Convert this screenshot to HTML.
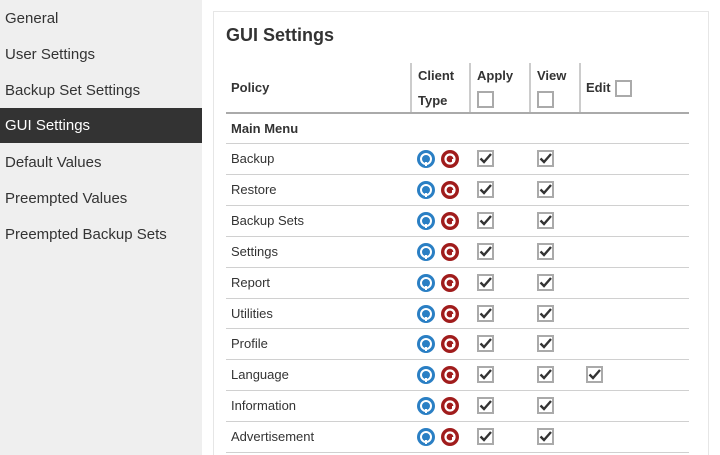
<!DOCTYPE html>
<html><head><style>
*{margin:0;padding:0;box-sizing:border-box}
html,body{width:720px;height:455px;overflow:hidden}
body{background:#fff;font-family:"Liberation Sans",Arial,sans-serif;color:#333;position:relative}
.side{position:absolute;left:0;top:0;width:202px;height:455px;background:#efefef}
.side div{position:absolute;left:5px;font-size:15px;height:36px;line-height:36px;margin-top:1px}
.side .act{left:0;width:202px;padding-left:5px;background:#333;color:#fff;top:108px;height:35px;line-height:35px;margin-top:0}
.panel{position:absolute;left:213px;top:11px;width:496px;height:450px;border:1px solid #e6e6e6}
h1{position:absolute;left:226px;top:25px;font-size:18px;font-weight:bold;color:#333}
.t{position:absolute;font-size:13px}
.b{font-weight:bold}
.vl{position:absolute;top:63px;height:50px;width:2px;background:#ccc}
.hl{position:absolute;left:226px;width:463px;height:1px;background:#d0d0d0}
.cb{position:absolute;width:17px;height:17px;border:2px solid #aaa;background:#fff}
.ck{position:absolute;width:17px;height:17px;border:2px solid #aaa;background:#fff}
.ck svg{position:absolute;left:0;top:0}
.ic{position:absolute;width:18px;height:18px}
</style></head><body>
<div class="side">
<div style="top:0">General</div>
<div style="top:36px">User Settings</div>
<div style="top:72px">Backup Set Settings</div>
<div class="act">GUI Settings</div>
<div style="top:144px">Default Values</div>
<div style="top:180px">Preempted Values</div>
<div style="top:216px">Preempted Backup Sets</div>
</div>
<div class="panel"></div>
<h1>GUI Settings</h1>
<div class="t b" style="left:231px;top:80px">Policy</div>
<div class="t b" style="left:418px;top:68px">Client</div>
<div class="t b" style="left:418px;top:93px">Type</div>
<div class="t b" style="left:477px;top:68px">Apply</div>
<div class="t b" style="left:537px;top:68px">View</div>
<div class="t b" style="left:586px;top:80px">Edit</div>
<div class="cb" style="left:477px;top:91px"></div>
<div class="cb" style="left:537px;top:91px"></div>
<div class="cb" style="left:615px;top:80px"></div>
<div class="vl" style="left:410px"></div>
<div class="vl" style="left:469px"></div>
<div class="vl" style="left:529px"></div>
<div class="vl" style="left:579px"></div>
<div class="hl" style="top:112px;height:2px;background:#aaa"></div>
<div class="t b" style="left:231px;top:121px">Main Menu</div>
<div id="rows"></div>
<script>
var n=["Backup","Restore","Backup Sets","Settings","Report","Utilities","Profile","Language","Information","Advertisement"];
var h="";var chk='<svg width="13" height="13" viewBox="0 0 13 13"><path d="M1.5 6.5 L5 10 L12 2" stroke="#333" stroke-width="2.4" fill="none"/></svg>';
for(var i=0;i<n.length;i++){var ty=143+i*30.9;var cy=ty+16;
h+='<div class="hl" style="top:'+Math.round(ty)+'px"></div>';
h+='<div class="t" style="left:231px;top:'+Math.round(cy-8)+'px">'+n[i]+'</div>';
h+='<svg class="ic" style="left:417px;top:'+Math.round(cy-9)+'px" viewBox="0 0 18 18"><circle cx="9" cy="9" r="9" fill="#2a7fc4"/><circle cx="9" cy="9" r="5" fill="none" stroke="#fff" stroke-width="2"/><rect x="8" y="12" width="2" height="4" fill="#fff"/></svg>';
h+='<svg class="ic" style="left:441px;top:'+Math.round(cy-9)+'px" viewBox="0 0 18 18"><circle cx="9" cy="9" r="9" fill="#a01c1c"/><circle cx="9" cy="9" r="4.5" fill="none" stroke="#fff" stroke-width="2.2"/><rect x="11" y="9" width="3" height="3" fill="#fff"/></svg>';
h+='<div class="ck" style="left:477px;top:'+Math.round(cy-9)+'px">'+chk+'</div>';
h+='<div class="ck" style="left:537px;top:'+Math.round(cy-9)+'px">'+chk+'</div>';
if(i==7)h+='<div class="ck" style="left:586px;top:'+Math.round(cy-9)+'px">'+chk+'</div>';
}
h+='<div class="hl" style="top:452px"></div>';
document.getElementById("rows").innerHTML=h;
</script>
</body></html>
